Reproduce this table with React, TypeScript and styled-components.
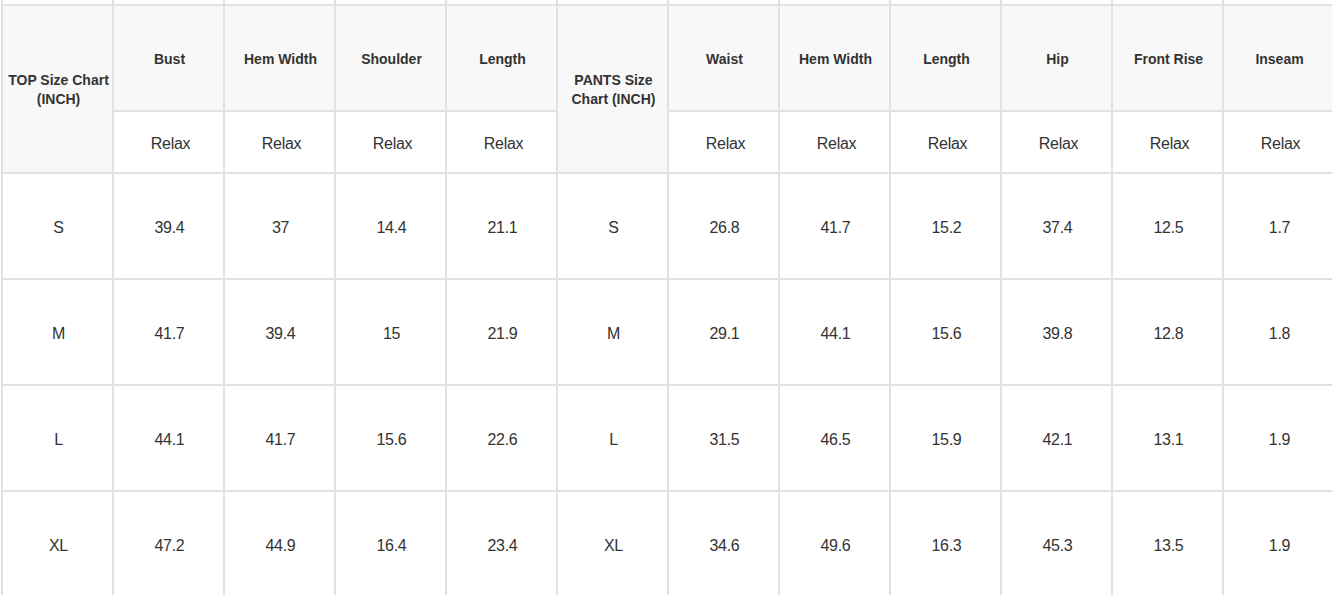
import React from "react";
import styled, { createGlobalStyle } from "styled-components";

const Global = createGlobalStyle`
  html, body {
    margin: 0;
    padding: 0;
    overflow: hidden;
    background: #ffffff;
  }
  body {
    font-family: "Liberation Sans", Arial, Helvetica, sans-serif;
    color: #333333;
  }
`;

const LINE = "#e1e1e1";

const Wrapper = styled.div`
  padding-left: 1px;
  width: 1340px;
`;

const Table = styled.table`
  table-layout: fixed;
  width: 1334px;
  border-collapse: separate;
  border-spacing: 0;
  border-left: 2px solid ${LINE};
`;

const SpacerCell = styled.td`
  box-sizing: border-box;
  height: 6px;
  padding: 0;
  border-right: 2px solid ${LINE};
  border-bottom: 2px solid ${LINE};
`;

const Cell = styled.td`
  box-sizing: border-box;
  padding: 0 3px 0 5px;
  text-align: center;
  vertical-align: middle;
  border-right: 2px solid ${LINE};
  border-bottom: 2px solid ${LINE};
`;

const TitleCell = styled(Cell)`
  background: #f8f8f8;
  font-weight: bold;
  font-size: 14px;
  line-height: 19px;
  padding-top: 2px;
`;

const HeadCell = styled(Cell)`
  height: 106px;
  background: #f8f8f8;
  font-weight: bold;
  font-size: 14px;
  line-height: 19px;
  padding-top: 3px;
`;

const SubCell = styled(Cell)`
  height: 62px;
  background: #ffffff;
  font-size: 16px;
  letter-spacing: -0.3px;
  padding: 3px 2px 0 6px;
`;

const DataCell = styled(Cell)`
  height: 106px;
  background: #ffffff;
  font-size: 16px;
  letter-spacing: -0.3px;
  padding-top: 4px;
`;

const topHeads = ["Bust", "Hem Width", "Shoulder", "Length"];
const pantsHeads = ["Waist", "Hem Width", "Length", "Hip", "Front Rise", "Inseam"];

const rows: { size: string; top: string[]; pants: string[] }[] = [
  { size: "S", top: ["39.4", "37", "14.4", "21.1"], pants: ["26.8", "41.7", "15.2", "37.4", "12.5", "1.7"] },
  { size: "M", top: ["41.7", "39.4", "15", "21.9"], pants: ["29.1", "44.1", "15.6", "39.8", "12.8", "1.8"] },
  { size: "L", top: ["44.1", "41.7", "15.6", "22.6"], pants: ["31.5", "46.5", "15.9", "42.1", "13.1", "1.9"] },
  { size: "XL", top: ["47.2", "44.9", "16.4", "23.4"], pants: ["34.6", "49.6", "16.3", "45.3", "13.5", "1.9"] },
];

export default function App() {
  return (
    <>
      <Global />
      <Wrapper>
        <Table>
          <tbody>
            <tr>
              {Array.from({ length: 12 }).map((_, i) => (
                <SpacerCell key={i} />
              ))}
            </tr>
            <tr>
              <TitleCell rowSpan={2}>
                TOP Size Chart
                <br />
                (INCH)
              </TitleCell>
              {topHeads.map((h, i) => (
                <HeadCell key={"t" + i}>{h}</HeadCell>
              ))}
              <TitleCell rowSpan={2}>
                PANTS Size
                <br />
                Chart (INCH)
              </TitleCell>
              {pantsHeads.map((h, i) => (
                <HeadCell key={"p" + i}>{h}</HeadCell>
              ))}
            </tr>
            <tr>
              {topHeads.map((_, i) => (
                <SubCell key={"rt" + i}>Relax</SubCell>
              ))}
              {pantsHeads.map((_, i) => (
                <SubCell key={"rp" + i}>Relax</SubCell>
              ))}
            </tr>
            {rows.map((r) => (
              <tr key={r.size}>
                <DataCell>{r.size}</DataCell>
                {r.top.map((v, i) => (
                  <DataCell key={"t" + i}>{v}</DataCell>
                ))}
                <DataCell>{r.size}</DataCell>
                {r.pants.map((v, i) => (
                  <DataCell key={"p" + i}>{v}</DataCell>
                ))}
              </tr>
            ))}
          </tbody>
        </Table>
      </Wrapper>
    </>
  );
}
